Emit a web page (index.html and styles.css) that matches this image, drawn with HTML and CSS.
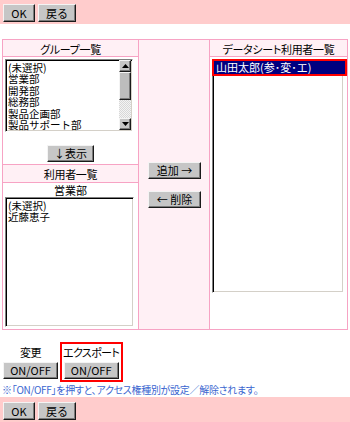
FILE: index.html
```html
<!DOCTYPE html>
<html lang="ja">
<head>
  <meta charset="UTF-8" />
  <title>データシート利用者設定</title>
  <link rel="stylesheet" href="styles.css">
</head>
<body>
  <div class="bar">
    <button class="btn btn-ok">OK</button>
    <button class="btn btn-back">戻る</button>
  </div>

  <div class="panel">
    <div class="hd">グループ一覧</div>
    <div class="mid">
      <button class="btn btn-move">追加 →</button>
      <button class="btn btn-move">← 削除</button>
    </div>
    <div class="hd">データシート利用者一覧</div>

    <div class="cell grp">
      <div class="list list-grp">
        <ul class="items">
          <li>(未選択)</li>
          <li>営業部</li>
          <li>開発部</li>
          <li>総務部</li>
          <li>製品企画部</li>
          <li>製品サポート部</li>
        </ul>
        <div class="scroll">
          <div class="sb-btn">
            <svg width="7" height="4" viewBox="0 0 7 4"><polygon points="3.5,0 7,4 0,4" fill="#000"/></svg>
          </div>
          <div class="sb-thumb"></div>
          <div class="sb-track"></div>
          <div class="sb-btn">
            <svg width="7" height="4" viewBox="0 0 7 4"><polygon points="0,0 7,0 3.5,4" fill="#000"/></svg>
          </div>
        </div>
      </div>
      <button class="btn btn-show">↓表示</button>
    </div>

    <div class="cell members">
      <div class="list list-members">
        <div class="sel">山田太郎(参･変･エ)</div>
      </div>
    </div>

    <div class="hd">利用者一覧</div>
    <div class="cell users">
      <div class="dept">営業部</div>
      <div class="list list-users">
        <ul class="items">
          <li>(未選択)</li>
          <li>近藤恵子</li>
        </ul>
      </div>
    </div>
  </div>

  <div class="perm">
    <div class="perm-item">
      <span class="perm-label">変更</span>
      <button class="btn btn-onoff">ON/OFF</button>
    </div>
    <div class="perm-item marked">
      <span class="perm-label">エクスポート</span>
      <button class="btn btn-onoff">ON/OFF</button>
    </div>
  </div>
  <p class="note">※「ON/OFF」を押すと、アクセス権種別が設定／解除されます。</p>

  <div class="bar bar-bottom">
    <button class="btn btn-ok">OK</button>
    <button class="btn btn-back">戻る</button>
  </div>
</body>
</html>
```

FILE: styles.css
```css
* { box-sizing: border-box; }
body {
  margin: 0;
  font-family: "Noto Sans CJK JP", sans-serif;
  font-size: 11px;
  color: #000;
  background: #fff;
}
.bar {
  display: flex;
  gap: 3px;
  height: 24px;
  padding: 4px 3px 0;
  background: #ffcccc;
}
.bar-bottom {
  height: 25px;
  padding-top: 5px;
}
.btn {
  height: 18px;
  padding: 0;
  font-family: "Noto Sans CJK JP", sans-serif;
  font-size: 11px;
  line-height: 1;
  color: #000;
  background: #c6c6c6;
  border: 1px solid;
  border-color: #f4f4f4 #1a1a1a #1a1a1a #f4f4f4;
  box-shadow: inset -1px -1px #7a7a7a;
  cursor: pointer;
}
.btn-ok { width: 32px; }
.btn-back { width: 38px; }
.btn-show { width: 47px; height: 17px; margin: 13px auto 0; display: block; }
.btn-move { width: 53px; height: 17px; }
.btn-onoff { width: 55px; height: 17px; }

.panel {
  display: grid;
  grid-template-columns: 135px 70px 137px;
  grid-template-rows: 16px 107px 17px 146px;
  gap: 1px;
  width: 346px;
  margin: 15px 0 0 2px;
  background: #f7a3c4;
  border: 1px solid #f7a3c4;
}
.hd {
  display: flex;
  align-items: center;
  justify-content: center;
  background: #fff0f5;
  font-feature-settings: "palt";
  letter-spacing: -0.3px;
  padding-top: 1px;
}
.mid {
  grid-column: 2;
  grid-row: 1 / span 4;
  display: flex;
  flex-direction: column;
  align-items: center;
  justify-content: center;
  gap: 12px;
  padding-left: 1px;
  background: #fff0f5;
}
.cell { background: #fff; padding: 2px; }
.members { grid-column: 3; grid-row: 2 / span 3; }
.users { padding-top: 0; }
.dept {
  height: 14px;
  line-height: 15px;
  text-align: center;
}

.list {
  display: flex;
  border: 1px solid;
  border-color: #808080 #fff #fff #808080;
  box-shadow: inset 1px 1px #000, inset -1px -1px #d4d0c8;
  background: #fff;
  padding: 1px;
}
.list-grp { width: 128px; height: 73px; overflow: hidden; }
.list-users { width: 129px; height: 130px; }
.list-members { width: 132px; height: 234px; align-items: flex-start; }
.items {
  flex: 1;
  margin: 0;
  padding: 1px 0 0 1px;
  list-style: none;
  font-size: 10.5px;
  line-height: 11.4px;
}
.items li { white-space: nowrap; }

.scroll {
  display: flex;
  flex-direction: column;
  width: 12px;
  margin-top: -1px;
}
.sb-btn, .sb-thumb {
  background: #c6c6c6;
  border: 1px solid;
  border-color: #f4f4f4 #1a1a1a #1a1a1a #f4f4f4;
  box-shadow: inset -1px -1px #7a7a7a;
}
.sb-btn {
  height: 12px;
  display: flex;
  align-items: center;
  justify-content: center;
}
.sb-thumb { height: 28px; background: #bdbdbd; }
.sb-track {
  flex: 1;
  background: repeating-conic-gradient(#d8d8d8 0 25%, #f4f4f4 0 50%) 0 0 / 2px 2px;
}

.sel {
  flex: 1;
  margin-right: -3px;
  height: 13px;
  line-height: 13px;
  padding-left: 2px;
  color: #fff;
  background: #000080;
  outline: 2px solid #ff0000;
  white-space: nowrap;
}

.perm {
  display: flex;
  margin-top: 12px;
  padding-left: 1px;
}
.perm-item {
  display: flex;
  flex-direction: column;
  align-items: center;
  border: 2px solid transparent;
  padding: 0 0 1px;
}
.perm-item.marked {
  border-color: #ff0000;
  padding: 0 2px 1px 1px;
}
.perm-label {
  height: 16px;
  line-height: 16px;
  margin-bottom: 2px;
  font-feature-settings: "palt";
  letter-spacing: -0.6px;
}
.note {
  margin: 0;
  padding-left: 2px;
  height: 15px;
  line-height: 15px;
  font-size: 10px;
  letter-spacing: -0.3px;
  color: #3a66d0;
  font-feature-settings: "palt";
  white-space: nowrap;
}
```
